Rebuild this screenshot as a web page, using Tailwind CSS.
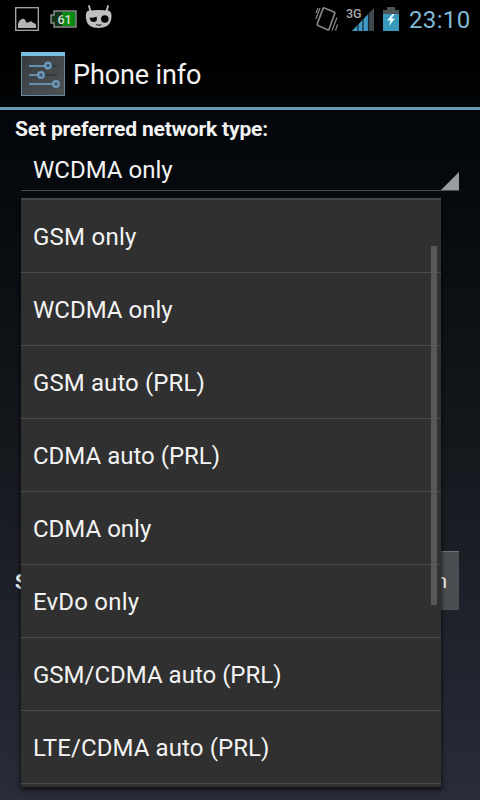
<!DOCTYPE html>
<html lang="en">
<head>
<meta charset="utf-8">
<title>Phone info</title>
<script src="https://cdn.jsdelivr.net/npm/@tailwindcss/browser@4"></script>
</head>
<body class="bg-black">
<div class="relative flex h-[800px] w-[480px] flex-col overflow-hidden bg-linear-to-b from-[#010306] via-[#12161a] to-[#292c39] font-['Roboto',sans-serif] text-[#f3f3f3]">
  <header class="flex h-[38px] shrink-0 items-center bg-black pl-[15px] pr-[10px]">
    <svg class="h-6 w-6 shrink-0" viewBox="0 0 24 24"><rect x=".7" y=".7" width="22.600" height="22.600" fill="none" stroke="#aaa" stroke-width="1.300"/><path d="M3 21v-4q1-4 4-5 3-1 4 3 1 1 3 0 3-2 4 1 4 0 3 5z" fill="#b3b3b3"/></svg>
    <svg class="ml-[11px] h-[18px] w-[27px] shrink-0" viewBox="0 0 27 18"><path d="M4 1h22v16H4v-4H1V5h3z" fill="#123415" stroke="#8a8a8a" stroke-width="1.5"/><rect x="12" y="2" width="13" height="14" fill="#098b13"/><text x="14.500" y="13.500" text-anchor="middle" font-size="12.500" font-weight="500" fill="#d4dfd4" font-family="Roboto">61</text></svg>
    <svg class="-mt-1 ml-[8px] h-[26px] w-[28px] shrink-0" viewBox="0 0 28 26"><path d="M6 9 4 2M21 9l2-7" stroke="#c0c0c0" stroke-width="1.800" stroke-linecap="round"/><path d="M4 6.500Q14 5.500 23 6.500 26.500 7 26.500 12 26.500 19 22 22 18 24 13.500 24 8 24 5 22 .8 19 .8 12 .8 7 4 6.500z" fill="#c0c0c0"/><path d="M4.500 13.500q3.500 1 7-1 1.500 5-2.500 5.500-3.500.5-4.500-4.500z" fill="#050505"/><circle cx="19.800" cy="15" r="3.800" fill="#050505"/><path d="M11 20.500q3 1.500 5.500 0" fill="none" stroke="#333" stroke-width="1.300"/></svg>
    <div class="flex-1"></div>
    <svg class="mr-[1px] h-[26px] w-6 shrink-0" viewBox="0 0 24 26"><g fill="none" stroke="#858585"><path stroke-width="1.700" d="m9.500 2 9.500 4q1.200.5.700 1.700L14 23.200q-.5 1-1.500.5L3 19.500q-1.200-.5-.7-1.700L8 2.700Q8.500 1.600 9.500 2z"/><path stroke-width="1.200" d="M.8 13 5 2M1 7l2-5M17 24.500l5-13M20.500 24.500l2-6"/></g></svg>
    <svg class="mt-[2px] ml-[6px] h-7 w-[29px] shrink-0" viewBox="0 0 29 28"><path d="M28 2v23H6z" fill="#41484d"/><path d="M22.500 7.800V25H6z" fill="#4299c5"/><path d="M12 18v8M17 13v13M22.500 7v18" stroke="#0d2632" stroke-width="1.200"/><text x="0" y="11.500" font-size="12.500" font-weight="500" fill="#aaa" stroke="#000" stroke-width="2" paint-order="stroke" font-family="Roboto">3G</text></svg>
    <svg class="ml-[8px] h-6 w-[16px] shrink-0" viewBox="0 0 16 24"><path d="M4 0h8v3h4v6H0V3h4z" fill="#4c5357"/><path d="M0 7h16v17H0z" fill="#3999bd"/><path d="M9.500 7 4 13.500h3.500L6 19l6-7.500H8.500L11.500 7z" fill="#e8ffff"/></svg>
    <span class="ml-[10px] w-[61px] whitespace-nowrap pt-[2px] text-[24px] leading-[36px] tracking-[0.35px] text-[#80b9d5]">23:10</span>
  </header>
  <div class="flex h-[72px] shrink-0 items-center border-b-[3px] border-[#639cb5] bg-linear-to-b from-black to-[#030709] pl-[21px] pt-[4px]">
    <svg class="mb-px h-11 w-11 shrink-0" viewBox="0 0 44 44"><defs><linearGradient id="tile" x1="0" y1="0" x2="1" y2="1"><stop stop-color="#343b40"/><stop offset="1" stop-color="#505354"/></linearGradient></defs><rect x=".5" y=".5" width="43" height="43" fill="url(#tile)" stroke="#62899d"/><rect width="44" height="4" fill="#78bede"/><g fill="none"><path d="M8 14h28M8 23h28M8 32h28" stroke="#303a41" stroke-width="2"/><path d="M8 14h16M8 23h9M8 32h24" stroke="#668fae" stroke-width="2"/><g fill="#435462" stroke="#6c9bbf" stroke-width="2.200"><circle cx="27" cy="13.500" r="2.800"/><circle cx="20" cy="23" r="2.800"/><circle cx="35" cy="32" r="2.800"/></g></g></svg>
    <h1 class="ml-[8px] text-[27px] leading-[40px] tracking-[-0.12px]">Phone info</h1>
  </div>
  <main class="flex flex-col">
    <p class="pl-[15px] pt-[7px] text-[21px] font-bold leading-6 tracking-[-0.18px]">Set preferred network type:</p>
    <div class="ml-[21px] flex h-[50px] w-[438px] items-end border-b border-[#4b4e50]">
      <span class="flex-1 pl-[12px] text-[24px] leading-[40px]">WCDMA only</span>
      <svg class="h-[18px] w-[18px]" viewBox="0 0 18 18"><path d="M18 0v18H0z" fill="#999b9c"/></svg>
    </div>
    <div class="mt-[360px] flex h-[59px] w-[459px] items-center justify-between pl-[15px]">
      <span class="pt-[2px] text-[21px] font-bold leading-6 text-white">S</span>
      <div class="flex h-[59px] w-[90px] items-center justify-end border-t border-[#707375] bg-[#4b4e51] pr-[12px] pt-[2px] text-[21px]">n</div>
    </div>
  </main>
  <ul class="absolute left-[21px] top-[198px] h-[589px] w-[420px] border-t-2 border-[#474747] bg-[#303030] text-[24px] shadow-[0_2px_4px_1px_rgba(0,0,0,0.6)]">
    <li class="flex h-[73px] items-center border-b border-[#4c4c4c] pl-[12px] pt-[2px] tracking-[0.25px]">GSM only</li>
    <li class="flex h-[73px] items-center border-b border-[#4c4c4c] pl-[12px] pt-[2px]">WCDMA only</li>
    <li class="flex h-[73px] items-center border-b border-[#4c4c4c] pl-[12px] pt-[2px] tracking-[0.1px]">GSM auto (PRL)</li>
    <li class="flex h-[73px] items-center border-b border-[#4c4c4c] pl-[12px] pt-[2px]">CDMA auto (PRL)</li>
    <li class="flex h-[73px] items-center border-b border-[#4c4c4c] pl-[12px] pt-[2px]">CDMA only</li>
    <li class="flex h-[73px] items-center border-b border-[#4c4c4c] pl-[12px] pt-[2px] tracking-[0.2px]">EvDo only</li>
    <li class="flex h-[73px] items-center border-b border-[#4c4c4c] pl-[12px] pt-[2px]">GSM/CDMA auto (PRL)</li>
    <li class="flex h-[73px] items-center border-b border-[#4c4c4c] pl-[12px] pt-[2px] tracking-[0.1px]">LTE/CDMA auto (PRL)</li>
    <li class="absolute right-[4px] top-[46px] h-[359px] w-[6px] bg-[#585858]" aria-hidden="true"></li>
  </ul>
</div>
</body>
</html>
